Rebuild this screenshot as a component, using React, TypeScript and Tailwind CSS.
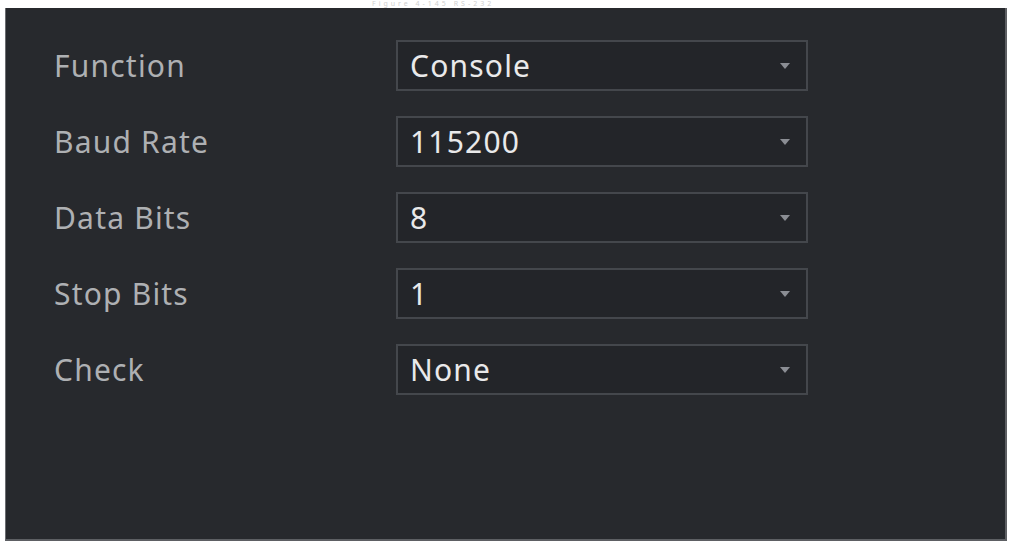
import React from "react";

const rows = [
  { label: "Function", value: "Console" },
  { label: "Baud Rate", value: "115200" },
  { label: "Data Bits", value: "8" },
  { label: "Stop Bits", value: "1" },
  { label: "Check", value: "None" },
];

function Arrow() {
  return (
    <svg width="12" height="8" viewBox="0 0 12 8" className="block">
      <path d="M1 1 L11 1 L6 7 Z" fill="#8b8e94" />
    </svg>
  );
}

export default function App() {
  return (
    <div
      className="w-[1010px] h-[543px] bg-white flex flex-col overflow-hidden"
      style={{ fontFamily: '"Noto Sans", "Open Sans", sans-serif' }}
    >
      <div className="h-[8px] shrink-0 flex items-center pl-[372px]">
        <span className="text-[7px] leading-[8px] tracking-[3px] text-[#d0d0d0] whitespace-nowrap">
          Figure 4-145 RS-232
        </span>
      </div>
      <div className="ml-[5px] mr-[3px] h-[533px] bg-[#27292d] border-r-2 border-b-2 border-[#5d5f63] border-l border-l-[#6a6c70] pt-[32px]">
        <div className="flex flex-col gap-[25px]">
          {rows.map((r) => (
            <div key={r.label} className="flex items-center h-[51px]">
              <div className="w-[390px] pl-[48px] text-[30px] tracking-[1.2px] text-[#aeb0b3] leading-none">
                {r.label}
              </div>
              <div className="w-[412px] h-[51px] border-2 border-[#44474c] bg-[#232529] flex items-center justify-between pl-[12px] pr-[15px]">
                <span className="text-[30px] tracking-[1.2px] text-[#e9e9ea] leading-none">{r.value}</span>
                <Arrow />
              </div>
            </div>
          ))}
        </div>
      </div>
    </div>
  );
}
